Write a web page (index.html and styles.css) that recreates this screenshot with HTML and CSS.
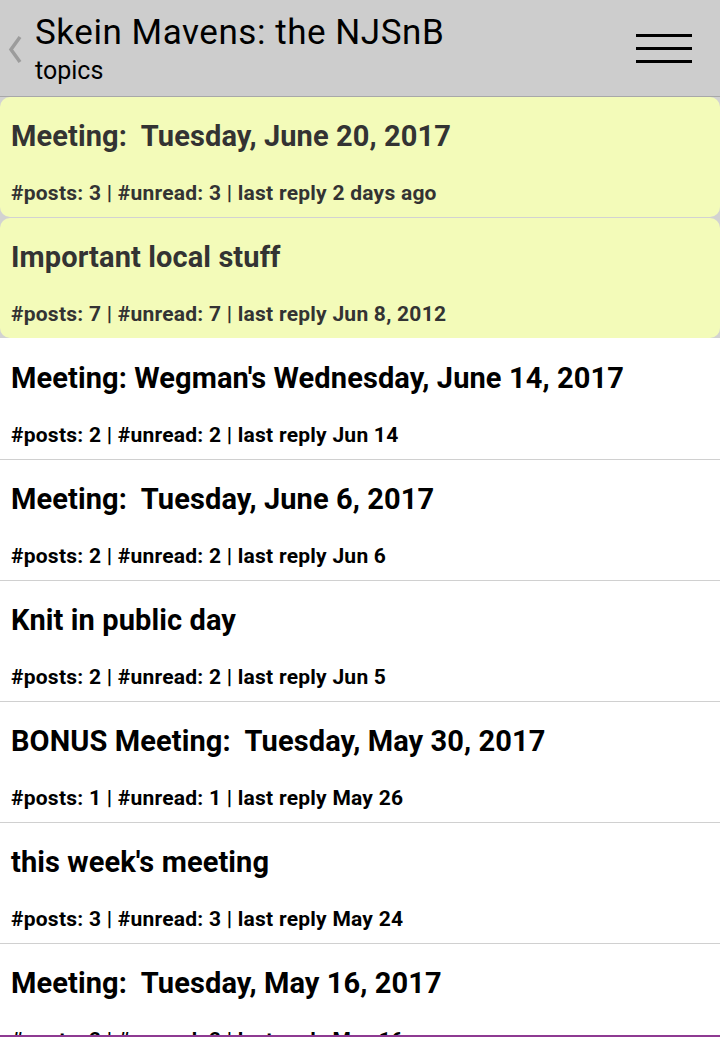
FILE: index.html
```html
<!DOCTYPE html>
<html>
<head>
    <meta charset="UTF-8">
    <meta name="viewport" content="width=device-width, initial-scale=1.0">
    <title>Skein Mavens: the NJSnB - topics</title>
    <link rel="stylesheet" href="styles.css">
</head>
<body>
    <div class="app">
        <div class="header">
            <svg class="back" width="35" height="97" viewBox="0 0 35 97">
                <polyline points="20,37 11,49.5 20,62" fill="none" stroke="#9c9c9c" stroke-width="3.5"/>
            </svg>
            <div class="titles">
                <div class="group-name">Skein Mavens: the NJSnB</div>
                <div class="page-name">topics</div>
            </div>
            <div class="menu">
                <span></span>
                <span></span>
                <span></span>
            </div>
        </div>

        <div class="topics">
            <div class="pinned">
                <div class="topic sticky">
                    <div class="topic-title">Meeting:&nbsp; Tuesday, June 20, 2017</div>
                    <div class="topic-meta">#posts: 3 | #unread: 3 | last reply 2 days ago</div>
                </div>
                <div class="topic sticky">
                    <div class="topic-title">Important local stuff</div>
                    <div class="topic-meta">#posts: 7 | #unread: 7 | last reply Jun 8, 2012</div>
                </div>
            </div>
            <div class="topic">
                <div class="topic-title">Meeting: Wegman's Wednesday, June 14, 2017</div>
                <div class="topic-meta">#posts: 2 | #unread: 2 | last reply Jun 14</div>
            </div>
            <div class="topic">
                <div class="topic-title">Meeting:&nbsp; Tuesday, June 6, 2017</div>
                <div class="topic-meta">#posts: 2 | #unread: 2 | last reply Jun 6</div>
            </div>
            <div class="topic">
                <div class="topic-title">Knit in public day</div>
                <div class="topic-meta">#posts: 2 | #unread: 2 | last reply Jun 5</div>
            </div>
            <div class="topic">
                <div class="topic-title">BONUS Meeting:&nbsp; Tuesday, May 30, 2017</div>
                <div class="topic-meta">#posts: 1 | #unread: 1 | last reply May 26</div>
            </div>
            <div class="topic">
                <div class="topic-title">this week's meeting</div>
                <div class="topic-meta">#posts: 3 | #unread: 3 | last reply May 24</div>
            </div>
            <div class="topic">
                <div class="topic-title">Meeting:&nbsp; Tuesday, May 16, 2017</div>
                <div class="topic-meta">#posts: 2 | #unread: 2 | last reply May 16</div>
            </div>
        </div>

        <div class="footer"></div>
    </div>
</body>
</html>
```

FILE: styles.css
```css
body {
    margin: 0;
    font-family: Roboto, "Noto Sans", sans-serif;
    background-color: white;
}
.app {
    display: flex;
    flex-direction: column;
    height: 100vh;
    overflow: hidden;
}
.header {
    display: flex;
    align-items: flex-start;
    height: 97px;
    flex-shrink: 0;
    background-color: #cdcdcd;
    border-bottom: 1px solid #a8a8a8;
    box-sizing: border-box;
}
.back {
    display: block;
    flex-shrink: 0;
}
.titles {
    flex: 1;
    padding-top: 13px;
    color: black;
}
.group-name {
    font-size: 35px;
    line-height: 40px;
    letter-spacing: 0.55px;
}
.page-name {
    margin-top: 3px;
    font-size: 25px;
    line-height: 30px;
}
.menu {
    display: flex;
    flex-direction: column;
    gap: 10px;
    width: 56px;
    margin: 34px 28px 0 0;
}
.menu span {
    display: block;
    height: 3px;
    background-color: black;
}
.topics {
    flex: 1;
    overflow: hidden;
}
.pinned {
    background-color: #d2d2d2;
}
.topic {
    height: 121px;
    box-sizing: border-box;
    padding: 22px 11px 0;
    border-bottom: 1px solid #d0d0d0;
    color: black;
}
.topic.sticky {
    background-color: #f3fbb9;
    border-radius: 10px;
    border-bottom: none;
    height: 120px;
    margin-bottom: 1px;
    color: #333333;
}
.topic-title {
    font-size: 29px;
    line-height: 34px;
    font-weight: bold;
    letter-spacing: 0.1px;
    white-space: nowrap;
}
.topic-meta {
    margin-top: 28px;
    font-size: 21px;
    line-height: 25px;
    font-weight: bold;
    letter-spacing: 0.25px;
    white-space: nowrap;
}
.footer {
    height: 2px;
    flex-shrink: 0;
    background-color: #8e3a92;
}
```
